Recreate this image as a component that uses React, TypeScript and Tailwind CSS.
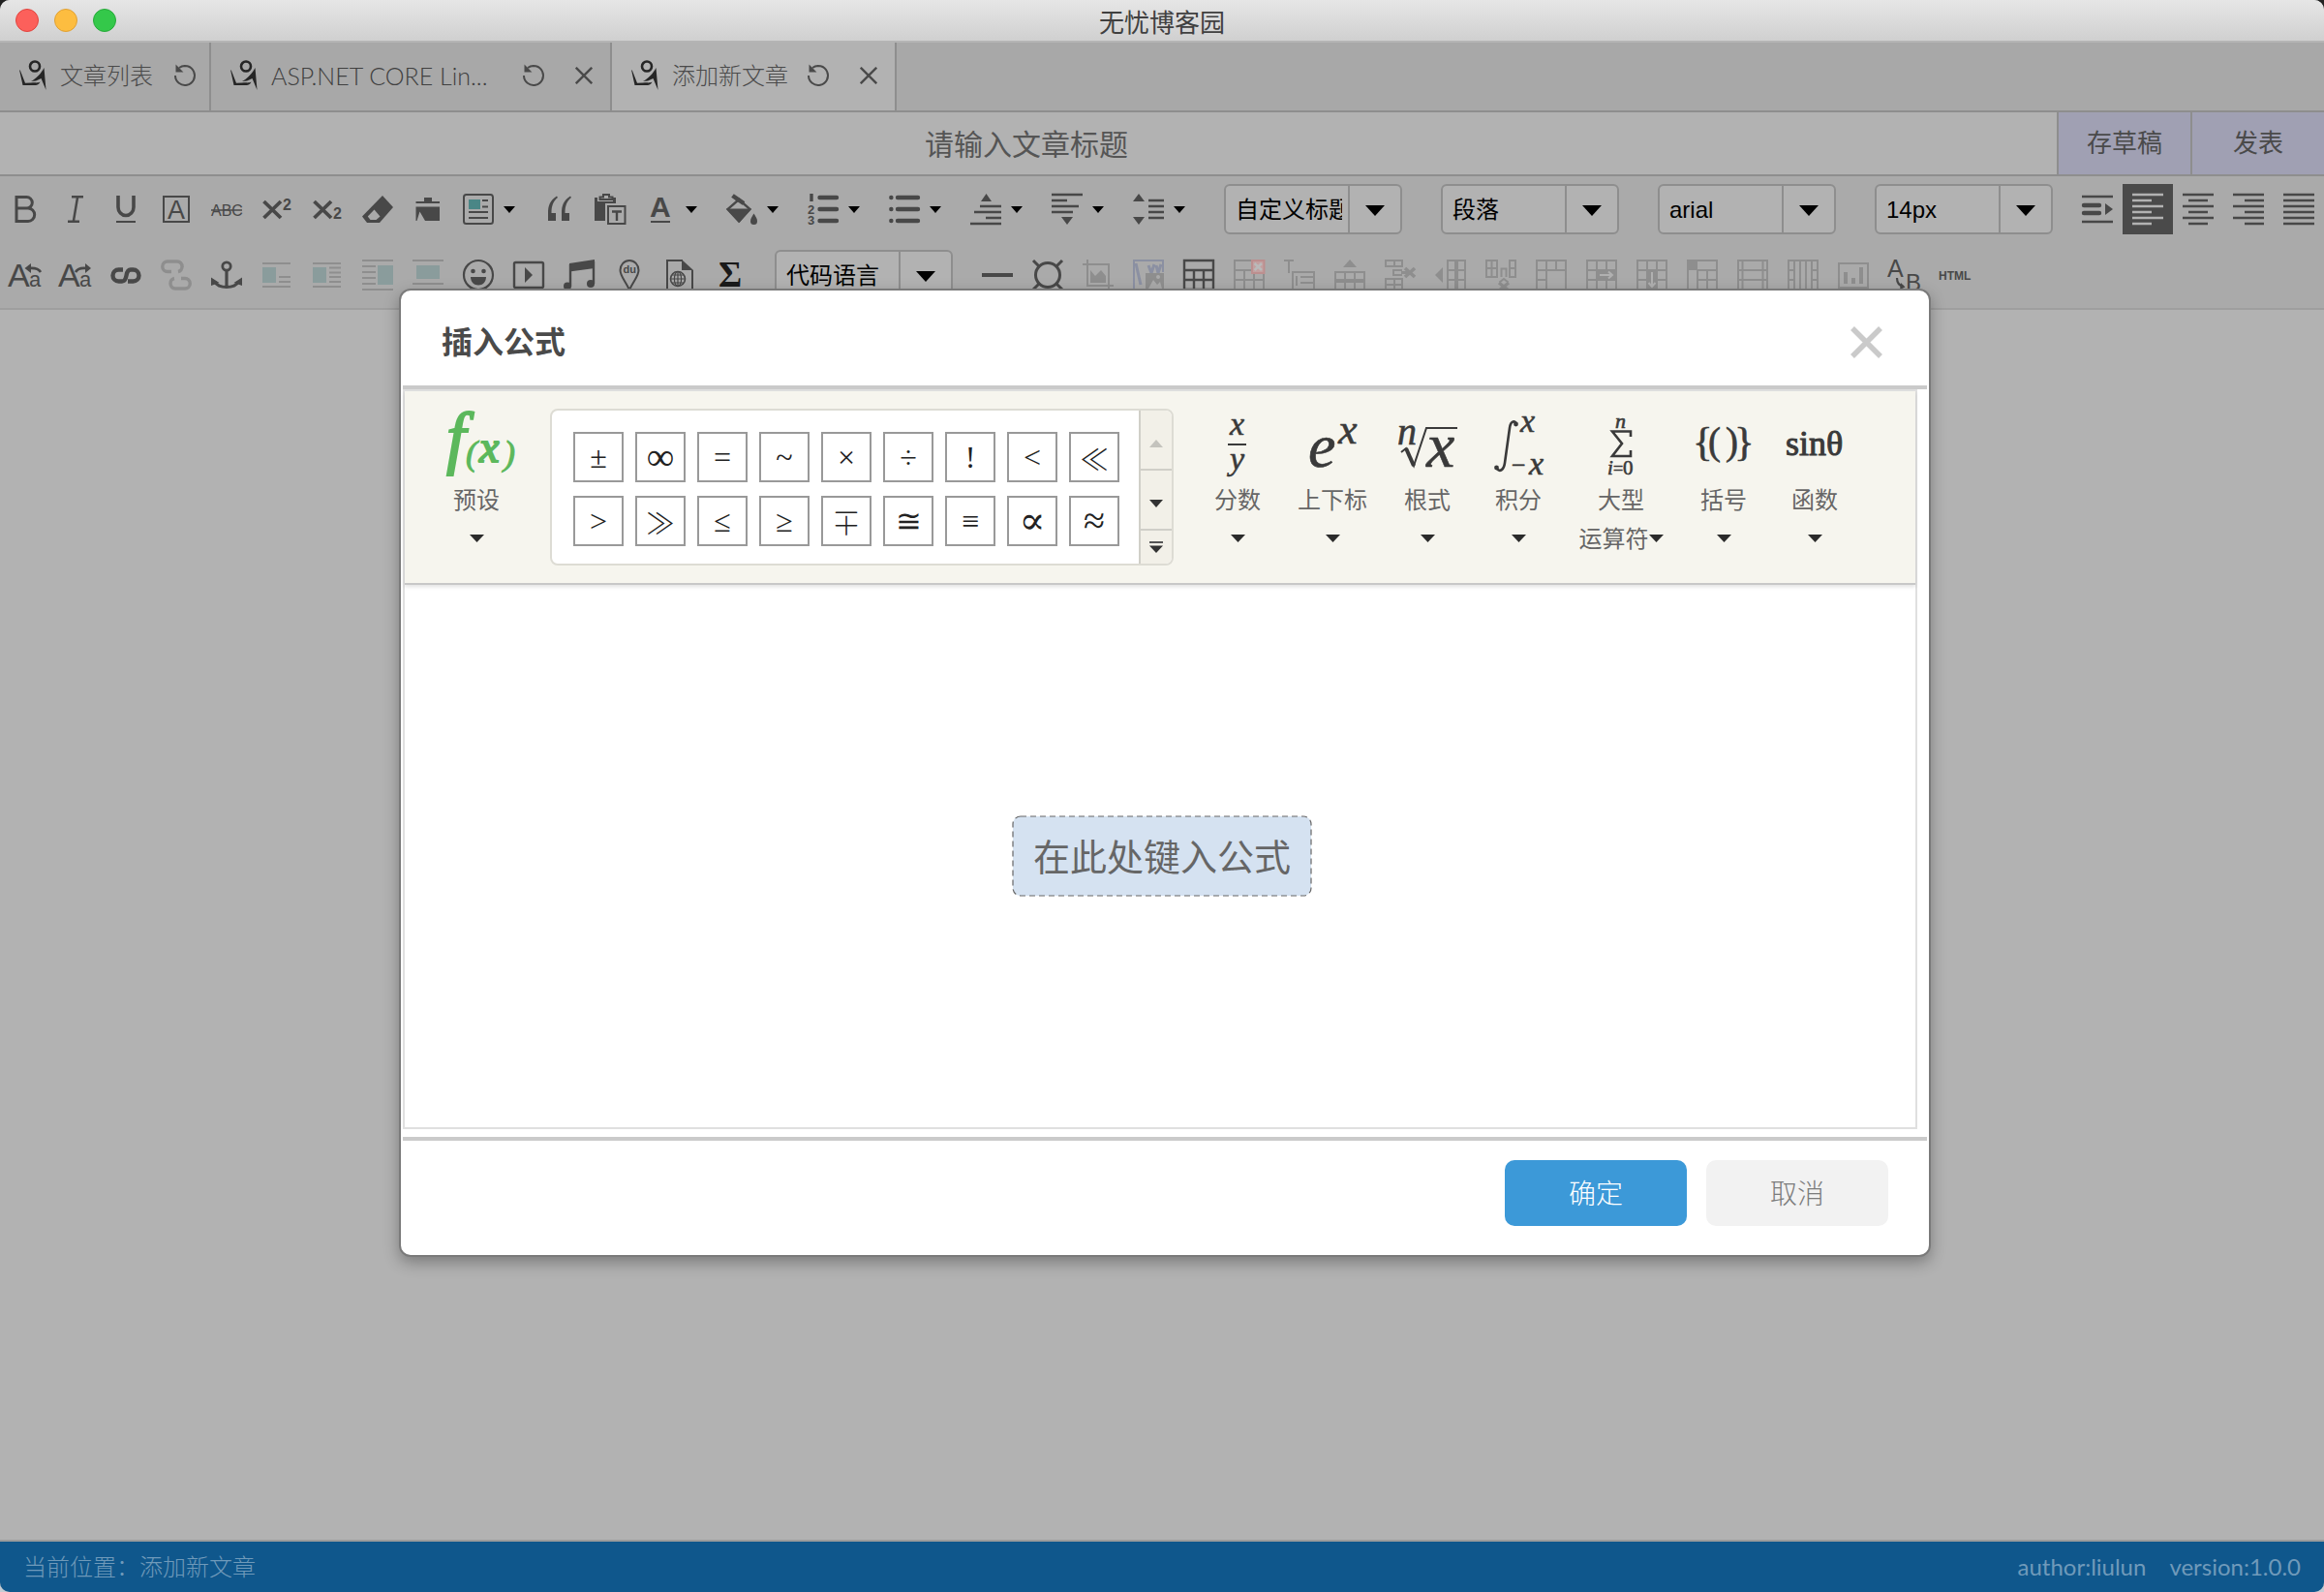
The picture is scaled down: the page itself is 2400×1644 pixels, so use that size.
import React from "react";

const FONT = 'font-["Lato","Noto_Sans_CJK_SC",sans-serif]';

type P = { children?: React.ReactNode; className?: string };

/* 32px drawing cell used by every toolbar glyph */
function G({ children, className = "" }: P) {
  return (
    <svg viewBox="0 0 32 32" className={"h-8 w-8 shrink-0 overflow-visible " + className} fill="none" stroke="currentColor" strokeWidth="2" aria-hidden="true">
      {children}
    </svg>
  );
}

function Lines({ d, w = 2 }: { d: string; w?: number }) {
  return <path d={d} strokeWidth={w} />;
}

function Txt({ x, y, s, b, serif, children }: { x: number; y: number; s: number; b?: boolean; serif?: boolean; children: string }) {
  return (
    <text
      x={x}
      y={y}
      fontSize={s}
      fontWeight={b ? 700 : 400}
      fontFamily={serif ? "Liberation Serif" : "Liberation Sans"}
      fill="currentColor"
      stroke="none"
    >
      {children}
    </text>
  );
}

function SmallCaret() {
  return (
    <svg viewBox="0 0 12 7" className="h-[7px] w-3 shrink-0" aria-hidden="true">
      <path d="M0 0H12L6 7Z" fill="#000" />
    </svg>
  );
}

type Tool = { name: string; icon: React.ReactNode; off?: boolean; active?: boolean; menu?: boolean };

const X_MARK = "M2.500 8 20 25M20 8 2.500 25";
const F = { fill: "currentColor", stroke: "none" } as const;

const rowOneA: Tool[] = [
  { name: "加粗", icon: <G><path d="M7 3.5h10.5a5.8 5.8 0 0 1 0 11.6H7Zm0 11.6h12a6.7 6.7 0 0 1 0 13.4H7Z" strokeWidth="3" /></G> },
  { name: "斜体", icon: <G><path d="M12 3.2H24M8 28.8H20M18.2 3 13.8 29" strokeWidth="2.5" /></G> },
  { name: "下划线", icon: <G><path d="M8 2v12a8 8.5 0 0 0 16 0V2" strokeWidth="3.6" /><path d="M6 29H26" /></G> },
  { name: "字符边框", icon: <G><rect x="3" y="3" width="26" height="26" /><Txt x={7} y={25.5} s={27}>A</Txt></G> },
  { name: "删除线", icon: <G><Txt x={0} y={23} s={16}>ABC</Txt><path d="M0 17H32" strokeWidth="1.6" /></G> },
  { name: "上标", icon: <G><path d={X_MARK} strokeWidth="3.8" /><Txt x={22} y={16.5} s={16} b>2</Txt></G> },
  { name: "下标", icon: <G><path d={X_MARK} strokeWidth="3.8" /><Txt x={22} y={26} s={16} b>2</Txt></G> },
  { name: "清除格式", icon: <G><path d="M21 2 32 14 18 30H5L0 23.5Z" {...F} /><path d="M12.5 16.5 18.5 23.5 14.5 27H8.5L5.8 23.5Z" fill="#aaaaaa" stroke="none" /></G> },
  { name: "格式刷", icon: <G><path d="M12 4h8v4h8v2H3.500V8H12Z" {...F} /><path d="M3.500 13.500H28V28H13L7.500 18.500 4.500 28H3.500Z" {...F} /></G> },
  {
    name: "自动排版",
    menu: true,
    icon: (
      <G>
        <rect x="1" y="1" width="30" height="30" rx="2.500" />
        <rect x="6" y="6" width="12" height="10" fill="#4a8686" stroke="none" />
        <Lines d="M20 7H26M20 13.500H26M6 19H26M6 25H26" />
      </G>
    ),
  },
  { name: "引用", icon: <G><path d="M13 2.500C6 7 4 12 4 20v8h8v-8H7.500C7.500 13 9 8 14 4Z" {...F} /><path d="M27 2.500C20 7 18 12 18 20v8h8v-8h-4.500C21.500 13 23 8 28 4Z" {...F} /></G> },
  {
    name: "纯文本粘贴",
    icon: (
      <G>
        <path d="M0 4h3v4h16V4h3v6H11v18H0Z" {...F} />
        <path d="M5.500 6V3.500H9V1h6v2.500h3.500V6Z" />
        <rect x="14" y="13" width="17.500" height="18" />
        <path d="M18 18.500H28M23 18.500V28" strokeWidth="2.400" />
      </G>
    ),
  },
  { name: "字体颜色", menu: true, icon: <G><Txt x={5} y={24} s={30} b>A</Txt><path d="M6 29H26" /></G> },
  {
    name: "背景色",
    menu: true,
    icon: (
      <G>
        <path d="M13 6 24.500 16 13 28.500 1.500 16Z" strokeWidth="2.400" />
        <path d="M0 15.500H26L13.500 30Z" {...F} />
        <path d="M6.500 2 18 10" strokeWidth="4.500" />
        <path d="M28.500 20.500c2 3 3.500 5.500 3.500 8a3.500 3.500 0 0 1-7 0c0-2.500 1.500-5 3.500-8Z" {...F} />
      </G>
    ),
  },
  {
    name: "有序列表",
    menu: true,
    icon: (
      <G>
        <path d="M4 0V8" strokeWidth="3.400" />
        <Txt x={0} y={20.500} s={13} b>2</Txt>
        <Txt x={0} y={32} s={13} b>3</Txt>
        <path d="M12.500 4H30M12.500 16H30M12.500 28H30" strokeWidth="4.400" strokeLinecap="round" />
      </G>
    ),
  },
  { name: "无序列表", menu: true, icon: <G><path d="M2.300 4h.1M2.300 16h.1M2.300 28h.1M9 4H30M9 16H30M9 28H30" strokeWidth="4.400" strokeLinecap="round" /></G> },
  { name: "段前距", menu: true, icon: <G><path d="M16.500 0 22 8H11Z" {...F} /><Lines d="M10 13H32M4 19H32M16 25H32M0 31H32" w={2.4} /></G> },
  { name: "段后距", menu: true, icon: <G><path d="M16 32 22 24H10Z" {...F} /><Lines d="M0 1H32M0 7H16M0 13H28M0 19H22" w={2.4} /></G> },
  { name: "行间距", menu: true, icon: <G><path d="M6 0 12 8H0ZM6 32 12 24H0Z" {...F} /><Lines d="M16 7H32M16 13H32M16 19H32M16 25H32" w={2.4} /></G> },
];

const rowOneB: Tool[] = [
  {
    name: "首行缩进",
    icon: (
      <G>
        <Lines d="M0 3H32M0 29H32" w={2.4} />
        <path d="M2 12H18M2 20H18" strokeWidth="4.400" strokeLinecap="round" />
        <path d="M24 10 32 16 24 22Z" {...F} />
      </G>
    ),
  },
  { name: "居左对齐", active: true, icon: <G><Lines d="M0 1H32M0 7H20M0 13H32M0 19H20M0 25H32M0 31H20" w={2.4} /></G> },
  { name: "居中对齐", icon: <G><Lines d="M0 1H32M6 7H26M0 13H32M6 19H26M0 25H32M6 31H26" w={2.4} /></G> },
  { name: "居右对齐", icon: <G><Lines d="M0 1H32M12 7H32M0 13H32M12 19H32M0 25H32M12 31H32" w={2.4} /></G> },
  { name: "两端对齐", icon: <G><Lines d="M0 1H32M0 7H32M0 13H32M0 19H32M0 25H32M0 31H32" w={2.4} /></G> },
];

const rowTwoA: Tool[] = [
  { name: "字母大写", icon: <G><Txt x={-2} y={28} s={34}>A</Txt><Txt x={20} y={28} s={22}>a</Txt><path d="M32 13C30 9.500 26 8.500 20 9" strokeWidth="2.600" /><path d="M15.500 9 22 4v10Z" {...F} /></G> },
  { name: "字母小写", icon: <G><Txt x={-2} y={28} s={34}>A</Txt><Txt x={20} y={28} s={22}>a</Txt><path d="M16 13C18 9.500 22 8.500 27 9" strokeWidth="2.600" /><path d="M32 9 26 4v10Z" {...F} /></G> },
  { name: "超链接", icon: <G><path d="M13 10.500H8.500a6 6 0 0 0 0 12H12c7 0 2-12 9-12h2.500a6 6 0 0 1 0 12H18" strokeWidth="4.400" /></G> },
  { name: "取消链接", off: true, icon: <G><path d="M11 12.500H7A5.200 5.200 0 0 1 7 2H17a5 5 0 0 1 5 5.200a5 5 0 0 1-4 5.300" strokeWidth="3.400" /><path d="M21 19.500H25A5.200 5.200 0 0 1 25 30H15a5 5 0 0 1-5-5.200a5 5 0 0 1 4-5.300" strokeWidth="3.400" /></G> },
  {
    name: "锚点",
    icon: (
      <G>
        <circle cx="16" cy="7" r="4.200" strokeWidth="2.800" />
        <path d="M16 11V28M3.500 23c2.500 4 7.500 5.500 12.500 5.500s10-1.500 12.500-5.500" strokeWidth="3.200" />
        <path d="M0 27V18.500L8.500 24ZM32 27V18.500L23.500 24Z" {...F} />
      </G>
    ),
  },
  { name: "左浮动", off: true, icon: <G><Lines d="M1 4H30M18 18H30M18 23H30M1 28H30" /><rect x="1" y="8" width="14" height="16" fill="#8a9c9c" stroke="none" /></G> },
  { name: "默认", off: true, icon: <G><Lines d="M1 4H30M18 8.500H30M18 13.500H30M18 18H30M18 23H30M1 28H30" /><rect x="1" y="8" width="14" height="16" fill="#8a9c9c" stroke="none" /></G> },
  { name: "右浮动", off: true, icon: <G><Lines d="M0 1H32M0 7H14M0 13H14M0 19H14M0 25H14M0 31H32" /><rect x="16" y="6" width="16" height="20" fill="#8a9c9c" stroke="none" /></G> },
  { name: "居中", off: true, icon: <G><Lines d="M0 1H32M0 25H32M0 31H32" /><rect x="4" y="6" width="24" height="14" fill="#8a9c9c" stroke="none" /></G> },
  {
    name: "表情",
    icon: (
      <G>
        <circle cx="16" cy="16" r="15" strokeWidth="2.200" />
        <circle cx="10.500" cy="12" r="2.300" {...F} />
        <circle cx="21.500" cy="12" r="2.300" {...F} />
        <path d="M8 18H24c0 5-3.500 8.500-8 8.500S8 23 8 18Z" {...F} />
      </G>
    ),
  },
  { name: "视频", icon: <G><rect x="1" y="3" width="30" height="26" rx="1.500" strokeWidth="2.400" /><path d="M12 8 20 16 12 24Z" {...F} /></G> },
  { name: "音乐", icon: <G><path d="M6 4 32 0v9L6 12.500Z" {...F} /><path d="M7 5V28M31 2V25" strokeWidth="2.400" /><circle cx="4" cy="27.500" r="4" {...F} /><circle cx="28" cy="25" r="4" {...F} /></G> },
  { name: "百度地图", icon: <G><path d="M16 31.500C12 22 6.500 17.500 6.500 11a9.500 10 0 0 1 19 0C25.500 17.500 20 22 16 31.500Z" /><Txt x={9.5} y={14} s={11} b>du</Txt></G> },
  {
    name: "插入框架",
    icon: (
      <G>
        <path d="M19 1H3V31H29V11" />
        <path d="M18 0 30 11H18Z" {...F} />
        <circle cx="14" cy="20" r="7.500" strokeWidth="1.600" />
        <path d="M6.500 20H21.500M14 12.500V27.500M8 16H20M8 24H20" strokeWidth="1.200" />
        <ellipse cx="14" cy="20" rx="3.600" ry="7.500" strokeWidth="1.200" />
      </G>
    ),
  },
  { name: "数学公式", icon: <G className="text-[#1a1a1a]"><Txt x={4} y={28} s={37} b serif>Σ</Txt></G> },
];

const GRID = "M1 1H31V31H1ZM1 11H31M1 21H31M11 1V31M21 1V31";

const rowTwoB: Tool[] = [
  { name: "分隔线", icon: <G><path d="M0 16H32" strokeWidth="4" /></G> },
  { name: "特殊字符", icon: <G><circle cx="16" cy="16" r="12.500" strokeWidth="3" /><path d="M1 1 7 7M31 1 25 7M1 31 7 25M31 31 25 25" strokeWidth="3" /></G> },
  { name: "截图", off: true, icon: <G><path d="M5 0V27H32M0 5H27V32" /><path d="M8 24V11l5 6 6-6 5 6v7Z" {...F} /></G> },
  {
    name: "图片转存",
    off: true,
    icon: (
      <G>
        <path d="M12 31H1V1H31V13" stroke="#8b90a2" />
        <path d="M3 4 8 26M16 6l3 8 3-9M24 6l2 8 3-9" stroke="#8b90a2" strokeWidth="3" />
        <path d="M13 14H32V32H13Z" {...F} />
        <path d="M16 30 21 21 25 26 28 23 30 30Z" fill="#aaaaaa" stroke="none" />
        <circle cx="26" cy="18" r="2" fill="#aaaaaa" stroke="none" />
      </G>
    ),
  },
  { name: "插入表格", icon: <G><path d="M1 1H31V31H1ZM1 11H31M1 21H31M11 11V31M21 11V31" strokeWidth="2.400" /></G> },
  {
    name: "删除表格",
    off: true,
    icon: (
      <G>
        <path d="M18 1H1V31H31V14M1 11H18M1 21H31M11 11V31M21 14V31" />
        <rect x="19" y="1" width="12.500" height="13" fill="#c3a0a0" stroke="#bc8f8f" />
        <path d="M21.500 4 29 11M29 4 21.500 11" stroke="#bababa" strokeWidth="2.600" />
      </G>
    ),
  },
  { name: "表格前插入行", off: true, icon: <G><path d="M0 1H10M5 1V14" /><path d="M9 13H31V31H9ZM13 17V27M17 18H31M17 24H31" /></G> },
  { name: "前插入行", off: true, icon: <G><path d="M16 0 23 8H9Z" {...F} /><path d="M1 13H31V31H1ZM11 13V31M21 13V31" /><path d="M1 22H31" strokeWidth="4" /></G> },
  { name: "删除行", off: true, icon: <G><path d="M1 1H18V7H1ZM10 1V7M18 11H9V16H18M1 20H18V31H1ZM10 20V31M1 26H18" /><path d="M21 9 31 18M31 9 21 18" strokeWidth="3.600" /><path d="M17 13.500H25" strokeWidth="3" /></G> },
  { name: "前插入列", off: true, icon: <G><path d="M0 16 8 8V24Z" {...F} /><path d="M13 1H31V31H13ZM13 11H31M13 21H31" /><path d="M22 1V31" strokeWidth="4" /></G> },
  { name: "删除列", off: true, icon: <G><path d="M1 1H12V18H1ZM6.500 1V18M1 9H12M25 1H31V18H25ZM25 9H31M16.500 18V9.500H21.500V18" /><path d="M14 24 24 32M24 24 14 32" strokeWidth="3.400" /><path d="M14.500 23.500 19 20 23.500 23.500" /></G> },
  { name: "合并多个单元格", off: true, icon: <G><path d="M1 1H31V31H1ZM1 11H31M1 21H11M11 1V31M21 1V11" /></G> },
  { name: "右合并单元格", off: true, icon: <G><path d={GRID} /><path d="M11 11H31V21H11Z" {...F} /><path d="M14 16H27M23 12.500 27 16 23 19.500" stroke="#b0b0b0" /></G> },
  { name: "下合并单元格", off: true, icon: <G><path d={GRID} /><path d="M11 11H21V31H11Z" {...F} /><path d="M16 13V28M12.500 24 16 28 19.500 24" stroke="#b0b0b0" /></G> },
  { name: "拆分单元格", off: true, icon: <G><path d="M1 1H31V31H1ZM11 11H31M11 21H31M11 11V31M21 11V31" /><path d="M1 1H11V11H1Z" {...F} /></G> },
  { name: "拆分行", off: true, icon: <G><path d="M1 1H31V31H1ZM1 11H31M1 21H31M5.500 1V31M26.500 1V31" /></G> },
  { name: "拆分列", off: true, icon: <G><path d="M1 1H31V31H1ZM7 1V31M13 1V31M19 1V31M25 1V31M1 11H7M1 21H7M25 11H31M25 21H31" /></G> },
  { name: "图表", off: true, icon: <G><rect x="1" y="4" width="30" height="25" /><path d="M8 13V25M16 19V25M24 8V25" strokeWidth="4" /></G> },
  { name: "查找替换", icon: <G><Txt x={-1} y={18} s={25}>A</Txt><Txt x={18} y={32} s={24}>B</Txt><path d="M9 19c0 5 2 8 7 9" strokeWidth="2.200" /><path d="M13 24 17.500 28.500 12 31Z" {...F} /></G> },
  { name: "源码", icon: <G><Txt x={0} y={21} s={12} b>HTML</Txt></G> },
];

function ToolButton({ tool }: { tool: Tool }) {
  const tone = tool.active ? "bg-[#4a4a4a] text-[#b2b2b2]" : tool.off ? "text-[#8e8e8e]" : "text-[#484848]";
  return (
    <button type="button" aria-label={tool.name} disabled={tool.off} className={"flex h-[52px] shrink-0 items-center " + (tool.menu ? "w-[84px] " : "w-[52px] ") + tone}>
      <span className="flex w-[52px] items-center justify-center">{tool.icon}</span>
      {tool.menu && <SmallCaret />}
    </button>
  );
}

function Combo({ label, value }: { label: string; value: string }) {
  return (
    <div className="mx-5 flex h-[52px] w-[184px] shrink-0 overflow-hidden rounded-md border-2 border-[#8e8e8e] bg-[#b2b2b2] text-black">
      <select aria-label={label} className="h-full w-[126px] appearance-none bg-transparent pt-0.5 pr-1.5 pl-2.5 font-['Liberation_Sans','Noto_Sans_CJK_SC',sans-serif] text-2xl">
        <option>{value}</option>
      </select>
      <span className="flex flex-1 items-center justify-center border-l-2 border-[#8e8e8e] pt-0.5">
        <svg viewBox="0 0 20 11" className="h-[11px] w-5" aria-hidden="true">
          <path d="M0 0H20L10 11Z" fill="#000" />
        </svg>
      </span>
    </div>
  );
}

function Logo() {
  return (
    <svg viewBox="0 0 28 32" className="h-8 w-7 shrink-0 overflow-visible text-[#262626]" fill="currentColor" aria-hidden="true">
      <circle cx="16" cy="6.500" r="5" fill="none" stroke="currentColor" strokeWidth="2.600" />
      <path d="M0 10 3.500 26H17C19.500 25.500 21 24 21.500 22.500C19 24 17 23 12 23.500L6 23.800 1 11Z" />
      <path d="M25.500 8C22.500 14 17 19.500 12 22L17 21.500 22.500 19 27.500 31Z" />
    </svg>
  );
}

function Reload() {
  return (
    <button type="button" aria-label="刷新" className="shrink-0 text-[#4a4a4a]">
      <svg viewBox="0 0 22 22" className="block h-[22px] w-[22px] overflow-visible" fill="none" stroke="currentColor" strokeWidth="2" aria-hidden="true">
        <path d="M1 11a10 10 0 1 0 4-8C7 1.500 9 1 11 1" />
        <path d="M2.500 2V6.500H7Z" fill="currentColor" />
      </svg>
    </button>
  );
}

function CloseTab() {
  return (
    <button type="button" aria-label="关闭" className="shrink-0 text-[#4a4a4a]">
      <svg viewBox="0 0 18 18" className="block h-[18px] w-[18px]" stroke="currentColor" strokeWidth="2.400" aria-hidden="true">
        <path d="M.8.800 17.200 17.200M17.200.800.800 17.200" />
      </svg>
    </button>
  );
}

function DialogCaret() {
  return (
    <svg viewBox="0 0 15 8" className="h-2 w-[15px] shrink-0" aria-hidden="true">
      <path d="M0 0H15L7.500 8Z" fill="#2b2b2b" />
    </svg>
  );
}

function M({ x, y, s, i, w = 0.6, children, fill = "#3a3a3a" }: { x: number; y: number; s: number; i?: boolean; w?: number; children: string; fill?: string }) {
  return (
    <text x={x} y={y} fontSize={s} fontStyle={i ? "italic" : "normal"} fontFamily="Liberation Serif" fill={fill} stroke={fill} strokeWidth={w}>
      {children}
    </text>
  );
}

function Pic({ children }: P) {
  return (
    <svg viewBox="0 0 72 64" className="h-16 w-[72px] overflow-visible" aria-hidden="true">
      {children}
    </svg>
  );
}

const formulaMenus = [
  {
    label: "分数",
    width: "w-[94px]",
    pic: <Pic><M x={28} y={27} s={34} i>x</M><path d="M26 37H45" stroke="#3a3a3a" strokeWidth="2" /><M x={28} y={63} s={34} i>y</M></Pic>,
  },
  { label: "上下标", width: "w-[102px]", pic: <Pic><M x={11} y={60} s={64} i>e</M><M x={42} y={36} s={44} i>x</M></Pic> },
  {
    label: "根式",
    width: "w-[94px]",
    pic: (
      <Pic>
        <M x={5} y={37} s={40} i>n</M>
        <path d="M9 45 14 41 22 59 35 20H67" fill="none" stroke="#3a3a3a" strokeWidth="2" />
        <path d="M14 41 22 59" stroke="#3a3a3a" strokeWidth="4" />
        <M x={35} y={60} s={66} i>x</M>
      </Pic>
    ),
  },
  {
    label: "积分",
    width: "w-[94px]",
    pic: (
      <Pic>
        <path d="M34 16C33 12 28 12 27 20L22 56c-1 7-5 10-8 6" fill="none" stroke="#3a3a3a" strokeWidth="2.600" />
        <circle cx="33.500" cy="16" r="2.400" fill="#3a3a3a" />
        <circle cx="13.500" cy="61" r="2.400" fill="#3a3a3a" />
        <M x={38} y={24} s={34} i>x</M>
        <M x={29} y={67} s={26}>−</M>
        <M x={47} y={68} s={34} i>x</M>
      </Pic>
    ),
  },
  {
    label: "大型",
    second: "运算符",
    width: "w-[118px]",
    pic: (
      <Pic>
        <M x={30} y={20} s={22} i>n</M>
        <path d="M46 29V23.500H27L37 36 27 49H46V43" fill="none" stroke="#3a3a3a" strokeWidth="2.600" />
        <M x={22} y={68} s={21} i>i</M>
        <M x={28} y={68} s={18}>=</M>
        <M x={38} y={68} s={21}>0</M>
      </Pic>
    ),
  },
  { label: "括号", width: "w-[94px]", pic: <Pic><M x={4} y={48} s={43}>{"{"}</M><M x={20} y={47} s={39}>(</M><M x={38} y={47} s={39}>)</M><M x={47} y={48} s={43}>{"}"}</M></Pic> },
  { label: "函数", width: "w-[94px]", pic: <Pic><M x={6} y={48} s={36} w={1}>sinθ</M></Pic> },
];

const SERIF = "font-['Liberation_Serif','DejaVu_Serif',serif] text-[32px] ";
const SERIF_LARGE = "font-['Liberation_Serif','DejaVu_Serif',serif] text-[40px] ";
const THIN = "font-['Noto_Sans_CJK_SC','DejaVu_Sans',sans-serif] font-extralight text-[30px] ";

const symbols: [string, string][] = [
  ["±", SERIF], ["∞", SERIF_LARGE], ["=", SERIF], ["~", SERIF], ["×", SERIF], ["÷", SERIF], ["!", SERIF], ["<", SERIF], ["≪", THIN],
  [">", SERIF], ["≫", THIN], ["≤", SERIF], ["≥", SERIF], ["∓", THIN], ["≅", SERIF], ["≡", SERIF], ["∝", SERIF_LARGE], ["≈", SERIF_LARGE],
];

export default function App() {
  return (
    <div className="bg-linear-to-b from-[#222] from-50% to-[#c4ccd4] to-50%">
      <div className={"relative flex min-h-screen flex-col overflow-hidden rounded-[10px] bg-[#b2b2b2] text-2xl leading-8 text-[#4a4a4a] " + FONT}>
        <header className="relative flex h-11 shrink-0 items-center border-b-2 border-[#b4b4b4] bg-linear-to-b from-[#e6e6e6] to-[#d0d0d0] pl-4">
          <div className="flex gap-4">
            <button type="button" aria-label="关闭窗口" className="h-6 w-6 rounded-full border border-[#e0443e] bg-[#fc605b]" />
            <button type="button" aria-label="最小化" className="h-6 w-6 rounded-full border border-[#dfa034] bg-[#fdbd40]" />
            <button type="button" aria-label="全屏" className="h-6 w-6 rounded-full border border-[#27a93a] bg-[#34c84a]" />
          </div>
          <h1 className="pointer-events-none absolute inset-x-0 pt-1 text-center text-[26px] text-[#404040]">无忧博客园</h1>
        </header>

        <nav className="flex h-[72px] shrink-0 border-b-2 border-[#8e8e8e] bg-[#a8a8a8] font-light">
          <div className="flex items-center border-r-2 border-[#8e8e8e] pr-[14px] pb-0.5 pl-5">
            <Logo />
            <a href="#list" className="mr-[22px] ml-[14px]">文章列表</a>
            <Reload />
          </div>
          <div className="flex items-center border-r-2 border-[#8e8e8e] pr-[18px] pb-0.5 pl-5">
            <Logo />
            <a href="#edit" className="mr-4 ml-[14px] w-[244px] text-[25px] whitespace-nowrap text-[#404040]">ASP.NET CORE Lin...</a>
            <Reload />
            <span className="w-8" />
            <CloseTab />
          </div>
          <div className="flex items-center border-r-2 border-[#8e8e8e] bg-[#b2b2b2] pr-[18px] pb-0.5 pl-5">
            <Logo />
            <a href="#new" className="mr-5 ml-[14px]">添加新文章</a>
            <Reload />
            <span className="w-8" />
            <CloseTab />
          </div>
        </nav>

        <div className="flex h-[66px] shrink-0 border-b-2 border-[#8e8e8e]">
          <input
            aria-label="文章标题"
            placeholder="请输入文章标题"
            className="min-w-0 flex-1 bg-[#b2b2b2] pr-1 text-center text-[30px] outline-none placeholder:text-[#555]"
          />
          <button type="button" className="w-[138px] border-l-2 border-[#8e8e8e] bg-[#a0a0b3] pb-0.5 text-[26px]">存草稿</button>
          <button type="button" className="w-[138px] border-l-2 border-[#8e8e8e] bg-[#a0a0b3] pb-0.5 text-[26px]">发表</button>
        </div>

        <div className="flex shrink-0 flex-col gap-4 border-b-2 border-[#9e9e9e] bg-[#aaaaaa] py-2">
          <div className="flex">
            {rowOneA.map((t) => <ToolButton key={t.name} tool={t} />)}
            <Combo label="自定义标题" value="自定义标题" />
            <Combo label="段落格式" value="段落" />
            <Combo label="字体" value="arial" />
            <Combo label="字号" value="14px" />
            {rowOneB.map((t) => <ToolButton key={t.name} tool={t} />)}
          </div>
          <div className="flex">
            {rowTwoA.map((t) => <ToolButton key={t.name} tool={t} />)}
            <Combo label="代码语言" value="代码语言" />
            {rowTwoB.map((t) => <ToolButton key={t.name} tool={t} />)}
          </div>
        </div>

        <main className="flex-1" />

        <footer className="flex h-[54px] shrink-0 items-center justify-between border-t-2 border-[#9c9c9c] bg-[#0f578c] px-6 text-[#6f9aba]">
          <span className="font-light">当前位置：添加新文章</span>
          <span className="flex gap-6">
            <span>author:liulun</span>
            <span>version:1.0.0</span>
          </span>
        </footer>

        <section
          role="dialog"
          aria-label="插入公式"
          className="absolute top-[298px] left-[412px] w-[1582px] rounded-xl border-2 border-[#7a7a7a] bg-white shadow-[0_6px_16px_rgba(0,0,0,0.3)]"
        >
          <div className="mx-0.5 flex h-[102px] items-center justify-between border-b-4 border-[#cacaca] pt-2 pr-[46px] pl-10">
            <h2 className="text-[32px] font-bold">插入公式</h2>
            <button type="button" aria-label="关闭对话框">
              <svg viewBox="0 0 33 33" className="block h-[33px] w-[33px]" stroke="#cacaca" strokeWidth="5.500" aria-hidden="true">
                <path d="M2 2 31 31M31 2 2 31" />
              </svg>
            </button>
          </div>

          <div className="mr-3 ml-0.5 border-2 border-[#e0e0e0]">
            <div className="flex h-[200px] border-b-2 border-[#c8c8c8] bg-[#f6f5ee] pt-[18px] text-[#666] shadow-[0_2px_4px_rgba(0,0,0,0.12)]">
              <button type="button" className="mr-0.5 flex w-[148px] flex-col items-center">
                <svg viewBox="0 0 80 78" className="h-[78px] w-20 overflow-visible" aria-hidden="true">
                  <M x={9} y={54} s={72} i w={2} fill="#5cb85c">f</M>
                  <M x={29} y={58} s={36} i w={1} fill="#5cb85c">(</M>
                  <M x={43} y={55} s={46} i w={2} fill="#5cb85c">x</M>
                  <M x={68} y={58} s={36} i w={1} fill="#5cb85c">)</M>
                </svg>
                <span>预设</span>
                <span className="flex h-12 items-center"><DialogCaret /></span>
              </button>

              <div className="flex h-[162px] w-[644px] overflow-hidden rounded-lg border-2 border-[#dddcd4] bg-white">
                <div className="grid grow grid-cols-9 content-center gap-x-3 gap-y-[14px] pt-1 pr-5 pl-[22px]">
                  {symbols.map(([s, face]) => (
                    <button key={s} type="button" className={"flex h-[52px] w-[52px] items-center justify-center border-2 border-[#999] leading-8 text-[#222] " + face}>
                      {s}
                    </button>
                  ))}
                </div>
                <div className="flex w-[34px] shrink-0 flex-col border-l-2 border-[#d0cfc8] bg-[#f2f0e8]">
                  <button type="button" aria-label="上一页" className="flex flex-1 items-center justify-center border-b-2 border-[#d0cfc8] pt-2">
                    <svg viewBox="0 0 14 8" className="h-2 w-[14px]" aria-hidden="true"><path d="M0 8H14L7 0Z" fill="#c4c3bd" /></svg>
                  </button>
                  <button type="button" aria-label="下一页" className="flex flex-1 items-center justify-center border-b-2 border-[#d0cfc8] pt-2">
                    <svg viewBox="0 0 14 8" className="h-2 w-[14px]" aria-hidden="true"><path d="M0 0H14L7 8Z" fill="#333" /></svg>
                  </button>
                  <button type="button" aria-label="展开" className="flex h-[34px] items-center justify-center">
                    <svg viewBox="0 0 14 12" className="h-3 w-[14px]" aria-hidden="true"><path d="M0 4.500H14L7 12Z" fill="#333" /><path d="M0 1H14" stroke="#555" strokeWidth="2" /></svg>
                  </button>
                </div>
              </div>

              <div className="ml-[19px] flex">
                {formulaMenus.map((m) => (
                  <button key={m.label} type="button" className={"flex flex-col items-center " + m.width}>
                    <span className="flex h-[78px] items-start">{m.pic}</span>
                    <span>{m.label}</span>
                    <span className="flex h-12 items-center whitespace-nowrap">
                      {m.second}
                      <DialogCaret />
                    </span>
                  </button>
                ))}
              </div>
            </div>

            <div className="flex h-[560px] items-center justify-center pl-1">
              <button type="button" className="relative h-[82px] w-[308px] rounded-lg bg-[#d5e2f1] text-[38px] text-[#666]">
                <svg className="absolute inset-0 h-full w-full overflow-visible" aria-hidden="true">
                  <rect width="100%" height="100%" rx="8" fill="none" stroke="#666" strokeWidth="1.200" strokeDasharray="6 4" />
                </svg>
                在此处键入公式
              </button>
            </div>
          </div>

          <div className="mx-0.5 mt-2 flex h-[122px] gap-5 border-t-4 border-[#cacaca] pt-5 pr-10 text-[28px]">
            <button type="button" className="ml-auto h-[68px] w-[188px] rounded-[10px] bg-[#3c99d8] font-light text-white">确定</button>
            <button type="button" className="h-[68px] w-[188px] rounded-[10px] bg-[#f2f2f2] font-light text-[#7c7c7c]">取消</button>
          </div>
        </section>
      </div>
    </div>
  );
}
